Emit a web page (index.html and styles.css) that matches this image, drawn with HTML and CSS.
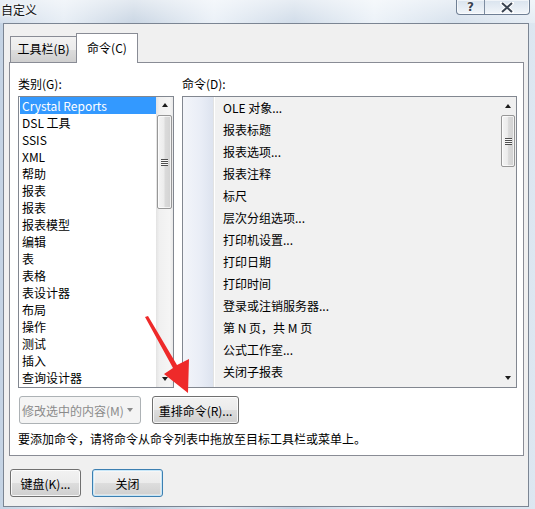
FILE: index.html
```html
<!DOCTYPE html>
<html lang="zh-CN">
<head>
<meta charset="utf-8">
<title>自定义</title>
<link rel="stylesheet" href="styles.css">
</head>
<body>
<div class="window">
  <div class="titlebar">
    <span class="title">自定义</span>
    <div class="caption-btns">
      <span class="cb help">?</span>
      <span class="cb close">
        <svg width="14" height="11" viewBox="0 0 14 11"><path d="M2 1 L12 10 M12 1 L2 10" stroke="#fff" stroke-width="4" stroke-linecap="square"/><path d="M2 1 L12 10 M12 1 L2 10" stroke="#3b4451" stroke-width="2"/></svg>
      </span>
    </div>
  </div>
  <div class="client">
    <div class="tabs">
      <div class="tab">工具栏(B)</div>
      <div class="tab active">命令(C)</div>
    </div>
    <div class="panel">
      <div class="cols">
        <div class="col col-left">
          <div class="label">类别(G):</div>
          <div class="listbox cat-list">
            <ul class="items">
              <li class="selected">Crystal Reports</li>
              <li>DSL 工具</li>
              <li>SSIS</li>
              <li>XML</li>
              <li>帮助</li>
              <li>报表</li>
              <li>报表</li>
              <li>报表模型</li>
              <li>编辑</li>
              <li>表</li>
              <li>表格</li>
              <li>表设计器</li>
              <li>布局</li>
              <li>操作</li>
              <li>测试</li>
              <li>插入</li>
              <li>查询设计器</li>
            </ul>
            <div class="vscroll">
              <span class="sarrow up"></span>
              <div class="track">
                <div class="thumb thumb-left"><span class="grip"></span></div>
              </div>
              <span class="sarrow down"></span>
            </div>
          </div>
        </div>
        <div class="col col-right">
          <div class="label">命令(D):</div>
          <div class="listbox cmd-list">
            <div class="gutter"></div>
            <ul class="items cmd-items">
              <li>OLE 对象...</li>
              <li>报表标题</li>
              <li>报表选项...</li>
              <li>报表注释</li>
              <li>标尺</li>
              <li>层次分组选项...</li>
              <li>打印机设置...</li>
              <li>打印日期</li>
              <li>打印时间</li>
              <li>登录或注销服务器...</li>
              <li>第 N 页，共 M 页</li>
              <li>公式工作室...</li>
              <li>关闭子报表</li>
            </ul>
            <div class="vscroll cmd-scroll">
              <span class="sarrow up"></span>
              <div class="track">
                <div class="thumb thumb-right"><span class="grip"></span></div>
              </div>
              <span class="sarrow down"></span>
            </div>
          </div>
        </div>
      </div>
      <div class="btnrow">
        <button class="btn btn-disabled btn-modify">修改选中的内容(M) <span class="caret"></span></button>
        <button class="btn btn-rearrange">重排命令(R)...</button>
      </div>
      <p class="hint">要添加命令，请将命令从命令列表中拖放至目标工具栏或菜单上。</p>
    </div>
    <div class="footer">
      <button class="btn btn-foot">键盘(K)...</button>
      <button class="btn btn-foot btn-default">关闭</button>
    </div>
  </div>
  <svg class="annot-arrow" width="535" height="509" viewBox="0 0 535 509">
    <polygon points="145,317 148,316 177,365 189,359 188,393 164,374 173,368" fill="#ee2a2a"/>
  </svg>
</div>
</body>
</html>
```

FILE: styles.css
```css
* { box-sizing: border-box; }
html, body {
  margin: 0;
  padding: 0;
}
body {
  width: 535px;
  height: 509px;
  overflow: hidden;
  font-family: "Noto Sans", "Noto Sans CJK SC", sans-serif;
  font-size: 12px;
  color: #000;
}
.window {
  position: relative;
  width: 535px;
  height: 509px;
  background: linear-gradient(90deg, #c4d3e4 0%, #dfe8f2 12%, #b9c9db 25%, #e4ecf5 40%, #c2d1e2 55%, #e6eef6 70%, #cad8e7 85%, #dde7f1 100%);
  display: flex;
  flex-direction: column;
}
.titlebar {
  height: 23px;
  display: flex;
  justify-content: space-between;
  align-items: flex-start;
  background: linear-gradient(180deg, rgba(255,255,255,0.6), rgba(255,255,255,0.25));
}
.title {
  margin: 1px 0 0 1px;
  line-height: 17px;
  font-family: "Noto Sans CJK SC", sans-serif;
  color: #111;
  text-shadow: 0 0 6px #fff, 0 0 3px #fff;
}
.caption-btns {
  display: flex;
  margin-right: 5px;
  height: 15px;
  border: 1px solid #6f7f94;
  border-top: none;
  border-radius: 0 0 4px 4px;
  background: linear-gradient(180deg, #d9e3ee, #f2f6fa);
  box-shadow: inset 0 0 0 1px rgba(255,255,255,0.6);
}
.cb {
  display: flex;
  align-items: center;
  justify-content: center;
  height: 14px;
}
.help {
  width: 28px;
  border-right: 1px solid #7d8ca0;
  font-family: "DejaVu Sans", sans-serif;
  font-weight: bold;
  font-size: 12px;
  color: #3b4451;
  text-shadow: 0 0 2px #fff, 0 0 2px #fff;
}
.close { width: 44px; }

.client {
  margin: 0 6px 2px 3px;
  flex: 1;
  background: #f0f0f0;
  border: 1px solid #7b8593;
  padding: 9px 5px 0 5px;
}
.tabs {
  display: flex;
  align-items: flex-end;
  height: 29px;
  margin-left: 1px;
  position: relative;
  z-index: 1;
}
.tab {
  height: 26px;
  padding: 0;
  line-height: 24px;
  border: 1px solid #898c95;
  border-bottom: none;
  background: linear-gradient(180deg, #f2f2f2 0%, #ebebeb 50%, #dddddd 51%, #cfcfcf 100%);
  font-family: "Noto Sans CJK SC", sans-serif;
  width: 67px;
  text-align: center;
  white-space: nowrap;
}
.tab.active {
  height: 30px;
  margin-bottom: -1px;
  margin-left: -1px;
  width: 62px;
  background: #fff;
  line-height: 27px;
}
.panel {
  background: #fff;
  border: 1px solid #898c95;
  height: 394px;
  width: 515px;
  padding: 12px 6px 0 8px;
}
.cols {
  display: flex;
  gap: 8px;
}
.col-left { width: 156px; }
.col-right { width: 335px; }
.label {
  height: 17px;
  line-height: 17px;
  margin-bottom: 4px;
  font-family: "Noto Sans CJK SC", sans-serif;
}
.listbox {
  height: 292px;
  border: 1px solid #828790;
  display: flex;
  background: #fff;
}
.items {
  list-style: none;
  margin: 0;
  padding: 0;
  flex: 1;
  font-family: "Noto Sans CJK SC", sans-serif;
}
.cat-list .items li {
  height: 17px;
  line-height: 17px;
  padding-left: 2px;
  margin-left: 1px;
  white-space: nowrap;
}
.cat-list .items li.selected {
  background: #3399ff;
  color: #fff;
}
.vscroll {
  width: 17px;
  display: flex;
  flex-direction: column;
  background: linear-gradient(90deg, #e3e3e3 0%, #f0f0f0 20%, #f5f5f5 80%, #e9e9e9 100%);
}
.sarrow {
  height: 16px;
  display: flex;
  align-items: center;
  justify-content: center;
}
.sarrow::before {
  content: "";
  width: 0;
  height: 0;
  border-left: 3.5px solid transparent;
  border-right: 3.5px solid transparent;
}
.sarrow.up::before { border-bottom: 4px solid #1b1b1b; }
.sarrow.down::before { border-top: 4px solid #1b1b1b; }
.track {
  flex: 1;
  display: flex;
  flex-direction: column;
  align-items: center;
}
.thumb {
  width: 15px;
  border: 1px solid #979797;
  border-radius: 2px;
  background: linear-gradient(90deg, #f4f4f4 0%, #ececec 45%, #dadada 55%, #d2d2d2 100%);
  box-shadow: inset 0 0 0 1px rgba(255,255,255,0.7);
  display: flex;
  align-items: center;
  justify-content: center;
}
.thumb-left { height: 94px; margin-top: 2px; }
.thumb-right { height: 52px; }
.grip {
  width: 7px;
  height: 7px;
  background: repeating-linear-gradient(180deg, #4e4e4e 0 1px, #f8f8f8 1px 2px);
}
.cmd-list { background: #f1f1f1; }
.gutter {
  width: 31px;
  background: linear-gradient(90deg, #f3f5fa 0%, #e9edf6 60%, #dde3ef 100%);
  border-right: 1px solid #e2e3e3;
  box-shadow: 1px 0 0 #fff;
}
.cmd-items li {
  height: 22px;
  line-height: 22px;
  padding-left: 9px;
  white-space: nowrap;
}
.cmd-scroll {
  width: 16px;
  background: #f0f0f0;
}
.cmd-scroll .thumb { width: 14px; }
.cmd-scroll .sarrow { height: 18px; }
.btnrow {
  display: flex;
  gap: 11px;
  margin-top: 8px;
  margin-left: 1px;
}
.btn {
  height: 28px;
  font-family: "Noto Sans CJK SC", sans-serif;
  font-size: 12px;
  color: #000;
  border: 1px solid #707070;
  border-radius: 3px;
  background: linear-gradient(180deg, #f2f2f2 0%, #ebebeb 50%, #dddddd 51%, #cfcfcf 100%);
  box-shadow: inset 0 0 0 1px rgba(255,255,255,0.8);
  padding: 0;
  display: flex;
  align-items: center;
  justify-content: center;
}
.btn-disabled {
  color: #8b8b8b;
  border-color: #adb2b5;
  background: #f4f4f4;
  box-shadow: none;
}
.btn-modify {
  width: 122px;
  justify-content: flex-start;
  padding-left: 2px;
  gap: 3px;
}
.caret {
  width: 0;
  height: 0;
  border-left: 3.5px solid transparent;
  border-right: 3.5px solid transparent;
  border-top: 4px solid #8b8b8b;
}
.btn-rearrange { width: 87px; }
.hint {
  margin: 6px 0 0 0;
  line-height: 17px;
  font-family: "Noto Sans CJK SC", sans-serif;
}
.footer {
  display: flex;
  gap: 11px;
  margin-top: 13px;
  margin-left: 1px;
}
.btn-foot { width: 71px; }
.btn-default {
  border-color: #3c7fb1;
  box-shadow: inset 0 0 0 1px #c6e6f8, inset 0 0 0 2px rgba(255,255,255,0.4);
  background: linear-gradient(180deg, #f2f2f2 0%, #ebebeb 50%, #dddddd 51%, #cfcfcf 100%);
}
.annot-arrow {
  position: absolute;
  left: 0;
  top: 0;
  pointer-events: none;
}
```
